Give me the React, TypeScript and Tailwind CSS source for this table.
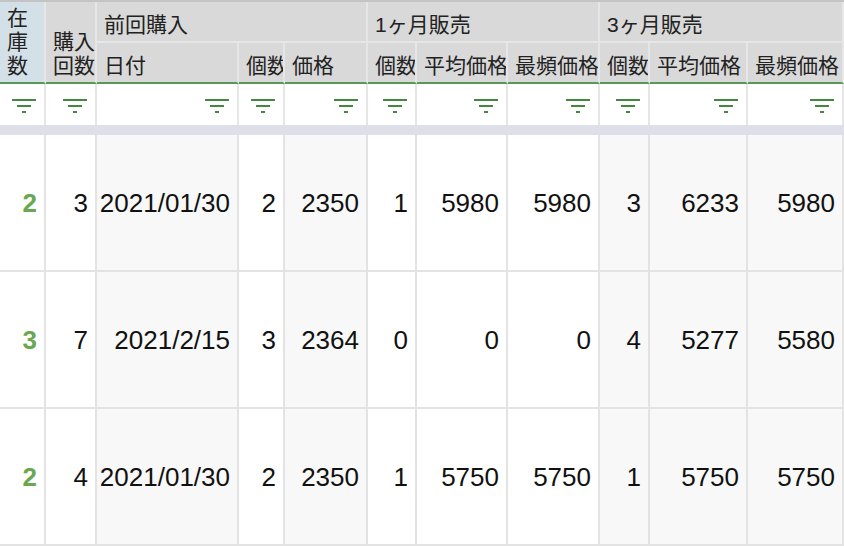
import type { ReactNode } from 'react';

const GRID =
  'grid grid-cols-[46px_51px_142px_46px_83px_49px_91px_92px_50px_98px_96px]';

const FONT = { fontFamily: '"Liberation Sans", "Noto Sans CJK JP", sans-serif' };

// background per column in the data rows
const colBg = [
  'bg-white',
  'bg-white',
  'bg-[#f8f8f8]',
  'bg-white',
  'bg-[#f8f8f8]',
  'bg-white',
  'bg-white',
  'bg-white',
  'bg-[#f8f8f8]',
  'bg-[#f8f8f8]',
  'bg-[#f8f8f8]',
];

const rows: string[][] = [
  ['2', '3', '2021/01/30', '2', '2350', '1', '5980', '5980', '3', '6233', '5980'],
  ['3', '7', '2021/2/15', '3', '2364', '0', '0', '0', '4', '5277', '5580'],
  ['2', '4', '2021/01/30', '2', '2350', '1', '5750', '5750', '1', '5750', '5750'],
];

function FilterIcon() {
  return (
    <svg width="24" height="14" viewBox="0 0 24 14" className="text-[#43883f]">
      <rect x="0" y="0" width="24" height="2" fill="currentColor" />
      <rect x="5" y="6" width="14" height="2" fill="currentColor" />
      <rect x="10" y="12" width="4" height="2" fill="currentColor" />
    </svg>
  );
}

function HeadCell({
  children,
  className = '',
}: {
  children: ReactNode;
  className?: string;
}) {
  return (
    <div
      className={`flex items-end overflow-hidden whitespace-nowrap border-r-2 border-[#e6e6e6] pb-[4px] pl-[7px] text-[21px] leading-[24px] text-[#222] ${className}`}
    >
      {children}
    </div>
  );
}

export default function App() {
  return (
    <div className="h-[546px] w-[844px] overflow-hidden bg-white" style={FONT}>
      {/* Header: two rows, with rowspan cells on the left */}
      <div className={`${GRID} grid-rows-[41px_41px] border-t-2 border-[#c4c4c4] bg-[#d9d9d9]`}>
        <div className="row-span-2 flex items-end border-r-2 border-b-2 border-r-[#e6e6e6] border-b-[#5a975a] bg-[#d4e0e7] pb-[4px] pl-[7px] text-[21px] leading-[24px] text-[#222]">
          在庫数
        </div>
        <div className="row-span-2 flex items-end border-r-2 border-b-2 border-r-[#e6e6e6] border-b-[#5a975a] pb-[4px] pl-[7px] text-[21px] leading-[24px] text-[#222]">
          購入回数
        </div>
        <HeadCell className="col-span-3 border-b-2 border-b-[#e6e6e6]">前回購入</HeadCell>
        <HeadCell className="col-span-3 border-b-2 border-b-[#e6e6e6]">1ヶ月販売</HeadCell>
        <HeadCell className="col-span-3 border-b-2 border-b-[#e6e6e6]">3ヶ月販売</HeadCell>

        {['日付', '個数', '価格', '個数', '平均価格', '最頻価格', '個数', '平均価格', '最頻価格'].map(
          (label, i) => (
            <HeadCell key={i} className="border-b-2 border-b-[#5a975a]">
              {label}
            </HeadCell>
          ),
        )}
      </div>

      {/* Filter row */}
      <div className={`${GRID} h-[41px] bg-white`}>
        {colBg.map((_, i) => (
          <div
            key={i}
            className="flex items-center justify-end border-r-2 border-[#e6e6e6] pt-[3px] pr-[8px]"
          >
            <FilterIcon />
          </div>
        ))}
      </div>

      {/* Frozen-row divider */}
      <div className="h-[10px] bg-[#dde0e8]" />

      {/* Data rows */}
      {rows.map((row, r) => (
        <div key={r} className={`${GRID} h-[137px]`}>
          {row.map((value, i) => (
            <div
              key={i}
              className={`flex items-center justify-end overflow-visible whitespace-nowrap border-r-2 border-b-2 border-[#e3e3e3] pr-[7px] text-[26px] leading-none ${colBg[i]} ${
                i === 0 ? 'font-bold text-[#6aa84f]' : 'text-[#111]'
              }`}
            >
              {value}
            </div>
          ))}
        </div>
      ))}
    </div>
  );
}
